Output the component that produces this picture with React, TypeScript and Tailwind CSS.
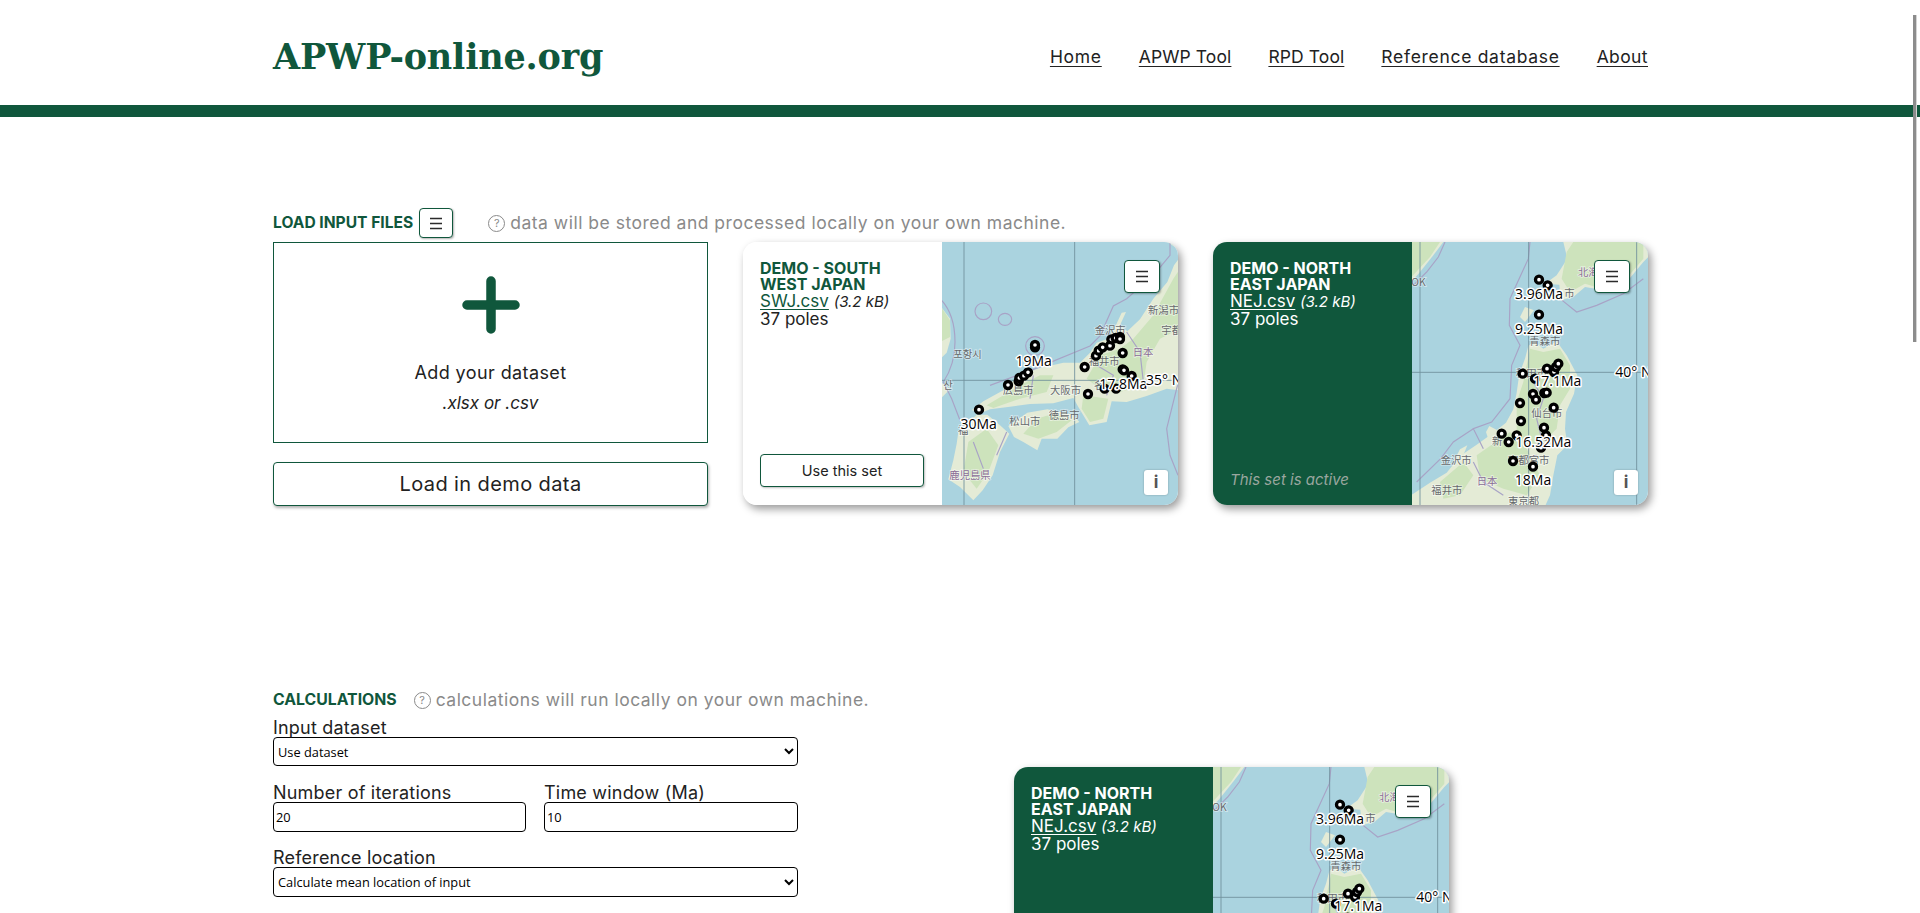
import React from "react";

type M = [number, number];
type L = { t: string; x: number; y: number; p?: boolean };

const Hamburger = () => (
  <svg width="14" height="13" viewBox="0 0 14 13" fill="none" stroke="#2b2b2b" strokeWidth="1.7">
    <path d="M1 1.5H13M1 6.5H13M1 11.5H13" />
  </svg>
);

const Help = ({ className }: { className: string }) => (
  <span className={"flex h-[17px] w-[17px] shrink-0 items-center justify-center rounded-full border border-[#8a8a8a] text-[11px] leading-none text-[#8a8a8a] " + className}>?</span>
);

function MapArt(props: {
  land: string[];
  greens: string[];
  lines: string[];
  grid: string;
  places: L[];
  markers: M[];
  labels: L[];
}) {
  return (
    <svg viewBox="6 0 708 789" className="block h-full w-full" preserveAspectRatio="none">
      <rect x="-10" y="-10" width="760" height="820" fill="#aad3df" />
      <g className="blur-[0.8px]">
        {props.land.map((d, i) => (
          <path key={i} d={d} fill="#e4ebd6" />
        ))}
        {props.greens.map((d, i) => (
          <path key={i} d={d} fill="#cde3bc" />
        ))}
        {props.lines.map((d, i) => (
          <path key={i} d={d} fill="none" stroke="#a8a3c6" strokeWidth="3.5" />
        ))}
      </g>
      <path d={props.grid} fill="none" stroke="#6f8f9b" strokeWidth="3" opacity="0.85" />
      {props.places.map((l, i) => (
        <text
          key={i}
          x={l.x}
          y={l.y}
          fontSize="31"
          fontFamily="'Noto Sans CJK SC','Noto Sans CJK JP',sans-serif"
          fill={l.p ? "#8a6c96" : "#66696c"}
          stroke="#ffffff"
          strokeOpacity="0.5"
          strokeWidth="5"
          paintOrder="stroke"
        >
          {l.t}
        </text>
      ))}
      {props.markers.map(([x, y], i) => (
        <circle key={i} cx={x} cy={y} r="10.5" fill="#ffffff" stroke="#000000" strokeWidth="10" />
      ))}
      {props.labels.map((l, i) => (
        <text
          key={i}
          x={l.x}
          y={l.y}
          textAnchor={l.p ? "start" : "middle"}
          fontSize="42"
          fontFamily="'Open Sans',sans-serif"
          fill="#000000"
          stroke="#ffffff"
          strokeWidth="9"
          strokeLinejoin="round"
          paintOrder="stroke"
        >
          {l.t}
        </text>
      ))}
    </svg>
  );
}

const swMap = (
  <MapArt
    land={[
      "M95 505 L130 478 L190 445 L240 398 L300 378 L370 362 L420 362 L450 332 L470 302 L500 292 L522 262 L545 212 L558 210 L540 250 L562 268 L600 232 L640 170 L682 120 L702 70 L720 45 L720 445 L680 440 L620 462 L560 480 L515 478 L500 540 L448 550 L415 495 L400 468 L340 484 L270 486 L210 494 L150 502 L130 510 Z",
      "M205 552 L262 512 L322 502 L400 518 L418 540 L385 556 L352 590 L305 590 L292 625 L250 600 L222 585 Z",
      "M55 570 L110 518 L142 518 L180 550 L208 575 L180 630 L158 700 L128 745 L100 775 L60 735 L25 712 L40 655 L50 605 Z",
      "M0 190 L30 230 L32 290 L20 332 L0 352 Z",
      "M0 418 L30 442 L0 472 Z",
      "M682 0 L720 0 L720 25 Z",
    ]}
    greens={[
      "M0 190 L30 235 L30 285 L0 300 Z",
      "M140 490 L240 430 L300 400 L340 400 L320 450 L240 470 L160 498 Z",
      "M440 410 L480 340 L540 320 L580 290 L640 220 L700 110 L720 80 L720 260 L660 290 L620 360 L610 430 L540 450 L480 440 Z",
      "M430 460 L505 470 L490 530 L450 540 L425 500 Z",
      "M250 575 L290 530 L340 515 L395 535 L350 570 L295 590 Z",
      "M85 600 L140 560 L175 610 L145 690 L110 740 L70 690 Z",
    ]}
    lines={[
      "M0 170 C30 200 45 240 45 300 C45 350 30 390 10 420 L35 470 L62 540",
      "M150 430 L280 382 L450 312 L480 282 L520 192 L560 170 L640 100 L690 40 L690 0",
      "M105 208 a25 25 0 1 0 50 0 a25 25 0 1 0 -50 0 M175 232 a20 18 0 1 0 40 0 a20 18 0 1 0 -40 0 M257 312 a28 28 0 1 0 56 0 a28 28 0 1 0 -56 0",
      "M560 270 L600 330 L610 420 M470 370 L520 400 L500 460 M280 400 L270 470 M200 570 L170 640 M100 600 L130 680",
      "M715 420 L680 560 L690 640 L714 700",
    ]}
    grid="M72 0V789M404 0V789M0 415H720"
    places={[
      { t: "포항시", x: 40, y: 347 },
      { t: "산", x: 10, y: 442 },
      { t: "新潟市", x: 624, y: 216 },
      { t: "宇都", x: 664, y: 275 },
      { t: "金沢市", x: 464, y: 277 },
      { t: "日本", x: 578, y: 342, p: true },
      { t: "福井市", x: 446, y: 370 },
      { t: "広島市", x: 188, y: 455 },
      { t: "大阪市", x: 330, y: 455 },
      { t: "名", x: 462, y: 442 },
      { t: "松山市", x: 208, y: 550 },
      { t: "徳島市", x: 326, y: 531 },
      { t: "鹿児島県", x: 28, y: 712, p: true },
      { t: "福", x: 54, y: 575 },
    ]}
    markers={[
      [285, 316], [285, 309], [204, 429], [236, 418], [238, 408], [252, 401], [264, 391], [117, 503],
      [434, 375], [444, 456], [468, 341], [476, 326], [488, 316], [510, 311], [514, 292], [527, 288],
      [540, 285], [540, 291], [548, 333], [548, 382], [552, 385], [575, 402], [494, 440], [528, 440],
    ]}
    labels={[
      { t: "19Ma", x: 281, y: 372 },
      { t: "30Ma", x: 116, y: 562 },
      { t: "17.8Ma", x: 550, y: 441 },
      { t: "35° N", x: 618, y: 429, p: true },
    ]}
  />
);

const neMap = (
  <MapArt
    land={[
      "M460 0 L472 50 L440 100 L405 125 L448 128 L452 175 L490 165 L525 135 L565 142 L600 150 L650 120 L700 60 L720 40 L720 0 Z",
      "M0 0 L100 0 L70 40 L30 90 L0 125 Z",
      "M345 195 L372 205 L345 240 L330 225 Z",
      "M355 312 L372 298 L400 320 L440 298 L470 340 L502 400 L492 455 L468 510 L465 560 L472 610 L442 640 L430 700 L420 760 L404 795 L0 795 L0 762 L60 722 L110 692 L150 642 L200 608 L250 572 L288 542 L310 502 L320 452 L328 395 L345 350 Z",
      "M238 552 L262 565 L235 592 L228 570 Z",
      "M172 610 L150 622 L130 660 L160 640 Z",
    ]}
    greens={[
      "M470 30 L490 0 L700 0 L700 50 L640 120 L590 145 L525 125 L480 150 L455 110 Z",
      "M0 0 L90 0 L60 45 L0 110 Z",
      "M360 320 L400 330 L450 320 L480 370 L480 440 L450 490 L440 560 L400 600 L350 610 L320 600 L320 480 L340 420 Z",
      "M200 640 L300 570 L350 620 L390 700 L350 760 L280 740 L210 710 Z",
      "M90 720 L160 660 L190 700 L150 760 L100 770 Z",
    ]}
    lines={[
      "M105 0 L85 45 L50 90 L10 130",
      "M360 0 L355 50 L300 170 L298 250 L330 310 L305 370 L300 470 L245 540 L190 560 L220 620",
      "M190 560 L130 600 L92 650 L20 720",
      "M450 170 L500 210 L560 190 L640 155 L700 110",
      "M370 420 L400 470 L380 530 L400 610 M300 660 L380 640 M190 660 L220 720 L280 760",
    ]}
    grid="M30 0V789M356 0V789M680 0V789M0 391H720"
    places={[
      { t: "北海", x: 504, y: 103, p: true },
      { t: "OK", x: 4, y: 132 },
      { t: "市", x: 463, y: 166 },
      { t: "青森市", x: 358, y: 308 },
      { t: "秋田市", x: 318, y: 404 },
      { t: "仙台市", x: 364, y: 526 },
      { t: "新", x: 246, y: 608 },
      { t: "宇都宮市", x: 294, y: 666 },
      { t: "金沢市", x: 92, y: 666 },
      { t: "日本", x: 200, y: 730, p: true },
      { t: "福井市", x: 64, y: 756 },
      { t: "東京都", x: 294, y: 790 },
    ]}
    markers={[
      [387, 113], [413, 130], [387, 218], [338, 395], [432, 390], [438, 375], [445, 365], [411, 380],
      [375, 410], [369, 456], [378, 473], [403, 453], [410, 452], [330, 483], [431, 497], [333, 537],
      [402, 557], [408, 580], [275, 575], [320, 580], [296, 600], [393, 617], [309, 657], [369, 674],
    ]}
    labels={[
      { t: "3.96Ma", x: 387, y: 170 },
      { t: "9.25Ma", x: 387, y: 276 },
      { t: "17.1Ma", x: 442, y: 433 },
      { t: "16.52Ma", x: 400, y: 615 },
      { t: "18Ma", x: 369, y: 729 },
      { t: "40° N", x: 616, y: 405, p: true },
    ]}
  />
);

function DataCard(props: { active?: boolean; t1: string; t2: string; file: string; map: React.ReactNode; extra?: string }) {
  const a = props.active;
  return (
    <div className={"flex h-[263px] w-[435px] shrink-0 overflow-hidden rounded-[14px] shadow-[3px_4px_8px_rgba(0,0,0,0.4)] " + (props.extra ?? "")}>
      <div className={"flex w-[199px] shrink-0 flex-col justify-between pt-[18px] pr-[18px] pb-[18px] pl-[17px] " + (a ? "bg-[#10573c] text-white" : "bg-white text-[#222]")}>
        <div>
          <div className={"text-[16px] leading-[16px] font-bold " + (a ? "text-white" : "text-[#10573c]")}>
            {props.t1}
            <br />
            {props.t2}
          </div>
          <div className="text-[17px] leading-[19px]">
            <span className={"underline underline-offset-2 " + (a ? "text-white" : "text-[#10573c]")}>{props.file}</span>{" "}
            <span className="text-[15px] italic">(3.2 kB)</span>
          </div>
          <div className="text-[17px] leading-[17px]">37 poles</div>
        </div>
        {a ? (
          <div className="-mb-[3px] text-[15px] leading-[20px] text-[#9aa69f] italic">This set is active</div>
        ) : (
          <button className="h-[33px] w-full rounded-[4px] border border-[#10573c] bg-white text-[14.5px] text-[#222] shadow-[1px_1px_2px_rgba(0,0,0,0.25)]">Use this set</button>
        )}
      </div>
      <div className="relative flex-1">
        {props.map}
        <button className="absolute top-[18px] right-[18px] flex h-[33px] w-[36px] items-center justify-center rounded-[4px] border border-[#10573c] bg-white shadow-[1px_1px_2px_rgba(0,0,0,0.3)]">
          <Hamburger />
        </button>
        <div className="absolute right-[10px] bottom-[10px] flex h-[25px] w-[24px] items-center justify-center rounded-[3px] bg-white text-[17px] font-bold text-[#555] shadow-[0_0_2px_rgba(0,0,0,0.3)]">i</div>
      </div>
    </div>
  );
}

export default function App() {
  return (
    <div className="relative h-[913px] overflow-hidden bg-white font-[Inter,sans-serif] text-[#222]">
      <div className="fixed top-[15px] right-[3px] z-10 h-[327px] w-[4px] border-r border-[#d4d4d4] bg-[#8c8c8c]" />
      <header className="h-[117px] border-b-[12px] border-[#10573c] bg-white">
        <div className="ml-[273px] flex h-[105px] w-[1375px] items-center justify-between pt-[10px]">
          <div className="font-['DejaVu_Serif',serif] text-[35px] font-bold tracking-[-0.2px] text-[#10573c]">APWP-online.org</div>
          <nav className="flex gap-[37px] text-[17.5px] text-[#222]">
            <a className="tracking-[0.7px] underline underline-offset-3">Home</a>
            <a className="tracking-[0.1px] underline underline-offset-3">APWP Tool</a>
            <a className="tracking-[0.1px] underline underline-offset-3">RPD Tool</a>
            <a className="tracking-[0.7px] underline underline-offset-3">Reference database</a>
            <a className="tracking-[0.4px] underline underline-offset-3">About</a>
          </nav>
        </div>
      </header>
      <main className="ml-[273px] w-[1375px]">
        <div className="flex h-[125px] items-end pb-[4px]">
          <div className="flex h-[30px] items-center">
            <span className="text-[15.6px] font-bold text-[#10573c]">LOAD INPUT FILES</span>
            <button className="ml-[6px] flex h-[30px] w-[34px] items-center justify-center rounded-[4px] border border-[#10573c] bg-white shadow-[1px_1px_2px_rgba(0,0,0,0.3)]">
              <Hamburger />
            </button>
            <Help className="ml-[35px]" />
            <span className="ml-[5px] whitespace-nowrap text-[17.5px] tracking-[0.5px] text-[#8a8a8a]">data will be stored and processed locally on your own machine.</span>
          </div>
        </div>
        <div className="flex gap-[35px]">
          <div className="w-[435px] shrink-0">
            <div className="flex h-[201px] flex-col items-center border border-[#10573c] pt-[33px]">
              <svg width="58" height="58" viewBox="0 0 58 58" className="block">
                <path d="M29 5V53M5 29H53" stroke="#10573c" strokeWidth="9.5" strokeLinecap="round" />
              </svg>
              <div className="mt-[27px] text-[18px] leading-[24px] tracking-[0.4px]">Add your dataset</div>
              <div className="mt-[6px] text-[17px] leading-[24px] italic">.xlsx or .csv</div>
            </div>
            <button className="mt-[19px] h-[44px] w-full rounded-[4px] border border-[#10573c] bg-white text-[20px] tracking-[0.4px] text-[#222] shadow-[1px_2px_3px_rgba(0,0,0,0.3)]">Load in demo data</button>
          </div>
          <DataCard t1="DEMO - SOUTH" t2="WEST JAPAN" file="SWJ.csv" map={swMap} />
          <DataCard active t1="DEMO - NORTH" t2="EAST JAPAN" file="NEJ.csv" map={neMap} />
        </div>
        <div className="mt-[182px] flex">
          <div className="w-[525px] shrink-0">
            <div className="flex h-[24px] items-center whitespace-nowrap">
              <span className="text-[15.8px] font-bold text-[#10573c]">CALCULATIONS</span>
              <Help className="ml-[17px]" />
              <span className="ml-[5px] text-[17.5px] tracking-[0.5px] text-[#8a8a8a]">calculations will run locally on your own machine.</span>
            </div>
            <label className="mt-[7px] block text-[18px] leading-[18px] tracking-[0.2px]">Input dataset</label>
            <select className="block h-[29px] w-full rounded-[4px] border border-black bg-white font-['Open_Sans',sans-serif] text-[12.8px] text-black">
              <option>Use dataset</option>
            </select>
            <div className="mt-[18px] flex gap-[18px]">
              <div className="w-[253px]">
                <label className="block text-[18px] leading-[18px] tracking-[0.2px]">Number of iterations</label>
                <input defaultValue="20" className="block h-[30px] w-full rounded-[4px] border border-black bg-white pl-[2px] font-['Open_Sans',sans-serif] text-[12.8px] text-black" />
              </div>
              <div className="flex-1">
                <label className="block text-[18px] leading-[18px] tracking-[0.2px]">Time window (Ma)</label>
                <input defaultValue="10" className="block h-[30px] w-full rounded-[4px] border border-black bg-white pl-[2px] font-['Open_Sans',sans-serif] text-[12.8px] text-black" />
              </div>
            </div>
            <label className="mt-[17px] block text-[18px] leading-[18px] tracking-[0.2px]">Reference location</label>
            <select className="block h-[30px] w-full rounded-[4px] border border-black bg-white font-['Open_Sans',sans-serif] text-[12.8px] text-black">
              <option>Calculate mean location of input</option>
            </select>
          </div>
          <DataCard active t1="DEMO - NORTH" t2="EAST JAPAN" file="NEJ.csv" map={neMap} extra="ml-[216px] mt-[79px]" />
        </div>
      </main>
    </div>
  );
}
